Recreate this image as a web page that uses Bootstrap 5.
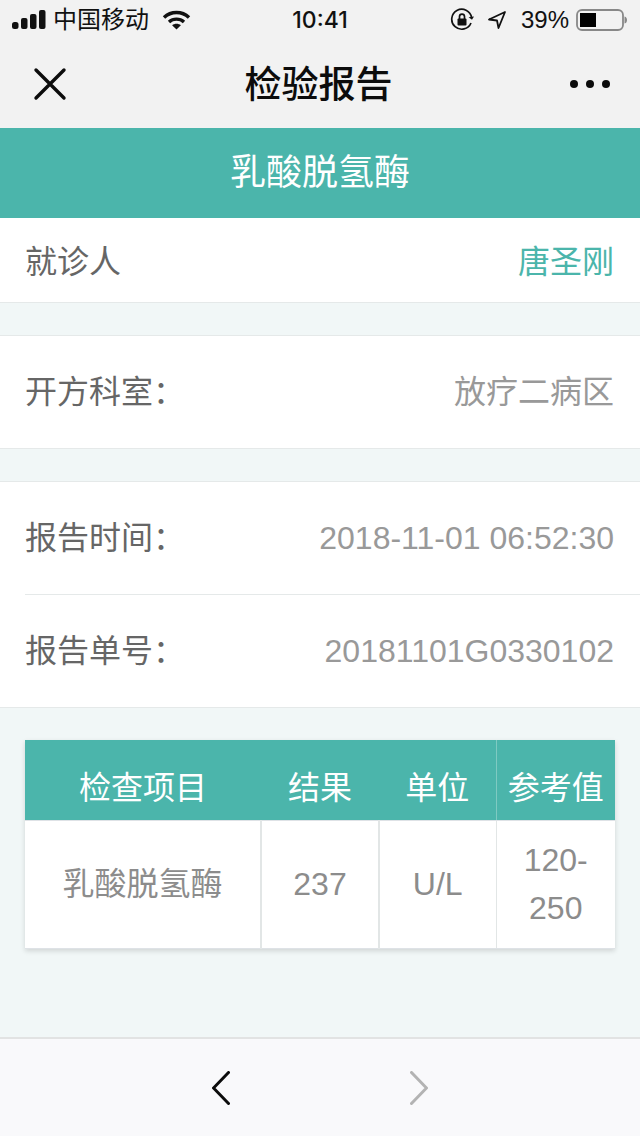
<!DOCTYPE html>
<html lang="zh-CN">
<head>
  <meta charset="UTF-8">
  <meta name="viewport" content="width=device-width, initial-scale=1">
  <title>检验报告</title>
  <link href="https://cdn.jsdelivr.net/npm/bootstrap@5.3.3/dist/css/bootstrap.min.css" rel="stylesheet">
  <style>
    html, body {
      height: 1136px;
      overflow: hidden;
    }
    body {
      background-color: #f1f7f7;
      font-family: "Liberation Sans", "Noto Sans CJK SC", sans-serif;
    }
    .screen {
      height: 1136px;
    }
    .status-bar {
      height: 40px;
      padding: 0 12px;
      background-color: #f2f2f2;
      color: #111;
      font-size: 24px;
    }
    .status-bar .carrier { font-size: 24px; line-height: 40px; margin-left: 5px; }
    .status-bar .clock { position: absolute; left: 0; right: 0; text-align: center; font-weight: 500; font-family: "Inter", "Liberation Sans", sans-serif; font-size: 23px; line-height: 42px; }
    .status-bar .pct { font-size: 24px; line-height: 40px; margin-left: 14px; margin-right: 7px; }
    .wifi-icon { margin-left: 13px; }
    .arrow-icon { margin-left: 13px; }
    .top-nav {
      height: 88px;
      background-color: #f2f2f2;
      padding: 0 30px 0 33px;
    }
    .top-nav .nav-title {
      font-size: 37px;
      font-weight: 500;
      color: #0c0c0c;
      line-height: 84px;
      padding-top: 4px;
    }
    .title-band {
      height: 90px;
      background-color: #4bb5ab;
      color: #fff;
      font-size: 36px;
      line-height: 90px;
      text-align: center;
    }
    .info-group {
      background-color: #fff;
      border-bottom: 1px solid #e5e9e9;
      padding-left: 25px;
    }
    .info-group.ruled { border-top: 1px solid #e5e9e9; margin-top: 32px; }
    .info-row {
      height: 112px;
      padding-right: 26px;
      font-size: 32px;
      color: #666;
    }
    .info-row + .info-row { border-top: 1px solid #e5e9e9; height: 113px; }
    .info-row.patient { height: 84px; padding-top: 4px; }
    .info-row .val { color: #999; }
    .info-row .val-name { color: #4bb5ab; }
    .result-wrap {
      margin: 32px 25px 0 25px;
      box-shadow: 0 2px 5px rgba(0, 0, 0, .14);
    }
    .result-table {
      width: 100%;
      table-layout: fixed;
      border-collapse: collapse;
      margin: 0;
      background-color: #fff;
    }
    .result-table th, .result-table td {
      text-align: center;
      vertical-align: middle;
      padding: 0;
      font-weight: 400;
    }
    .result-table th {
      height: 80px;
      padding-top: 16px;
      font-size: 32px;
      color: #fff;
      background-color: #4bb5ab;
      box-shadow: none;
    }
    .result-table th.divided { border-left: 1px solid #7fcac2; }
    .result-table td {
      height: 128px;
      font-size: 32px;
      line-height: 48px;
      color: #8c8c8c;
      background-color: #fff;
    }
    .result-table td + td { border-left: 2px solid #e2e6e6; }
    .result-table td:last-child { border-left-width: 1px; }
    .bottom-bar {
      height: 99px;
      background-color: #f9f9fb;
      border-top: 2px solid #e2e3e3;
    }
    .pager { gap: 180px; }
    .spacer-fill { flex: 1 1 auto; }
  </style>
</head>
<body>
  <div class="screen d-flex flex-column">

    <!-- status bar -->
    <div class="status-bar d-flex align-items-center position-relative">
      <svg width="36" height="20" viewBox="0 0 36 20" fill="#111">
        <rect x="0" y="12" width="6.5" height="7" rx="2.5"/>
        <rect x="9" y="8" width="6.5" height="11" rx="2"/>
        <rect x="18" y="4" width="6.5" height="15" rx="2"/>
        <rect x="27" y="0" width="6.5" height="19" rx="2"/>
      </svg>
      <span class="carrier">中国移动</span>
      <svg class="wifi-icon" width="29" height="20" viewBox="0 0 28 20" fill="none" stroke="#111" stroke-width="3.4">
        <path d="M1.5 7.5C8.5 .8 19.5 .8 26.5 7.5"/>
        <path d="M6.5 12C10.7 8.2 17.3 8.2 21.5 12"/>
        <path d="M14 19.5L9.6 15.2C12 13.2 16 13.2 18.4 15.2Z" fill="#111" stroke="none"/>
      </svg>
      <span class="clock">10:41</span>
      <div class="ms-auto d-flex align-items-center">
        <svg width="24" height="24" viewBox="0 0 24 24" fill="none" stroke="#111" stroke-width="1.7">
          <path d="M21 15A10 10 0 1 1 21.6 9.5"/>
          <path d="M18.6 9.2L22 11.8L24 8.6Z" fill="#111" stroke="none"/>
          <rect x="7.5" y="10.5" width="9" height="7" rx="1" fill="#111" stroke="none"/>
          <path d="M9.5 11V8.6a2.5 2.5 0 0 1 5 0V11"/>
        </svg>
        <svg class="arrow-icon" width="20" height="20" viewBox="0 0 20 20" fill="none" stroke="#111" stroke-width="1.8" stroke-linejoin="round">
          <path d="M18 2L2 9.5L10 10.5L11.5 18Z"/>
        </svg>
        <span class="pct">39%</span>
        <svg width="52" height="24" viewBox="0 0 52 24">
          <rect x="1" y="2" width="46" height="20" rx="5" fill="none" stroke="#888" stroke-width="1.8"/>
          <rect x="4" y="5" width="16" height="14" fill="#000"/>
          <path d="M48.5 8.5C50.5 9 51 10.5 51 12C51 13.5 50.5 15 48.5 15.5Z" fill="#888"/>
        </svg>
      </div>
    </div>

    <!-- nav -->
    <div class="top-nav d-flex align-items-center justify-content-between">
      <svg width="34" height="34" viewBox="0 0 34 34" fill="none" stroke="#0c0c0c" stroke-width="3.4" stroke-linecap="round">
        <path d="M3 3L31 31M31 3L3 31"/>
      </svg>
      <div class="nav-title">检验报告</div>
      <svg width="40" height="10" viewBox="0 0 40 10" fill="#0c0c0c">
        <circle cx="4" cy="5" r="4"/>
        <circle cx="20" cy="5" r="4"/>
        <circle cx="36" cy="5" r="4"/>
      </svg>
    </div>

    <div class="title-band">乳酸脱氢酶</div>

    <div class="info-group">
      <div class="info-row patient d-flex align-items-center justify-content-between">
        <span>就诊人</span><span class="val-name">唐圣刚</span>
      </div>
    </div>

    <div class="info-group ruled">
      <div class="info-row d-flex align-items-center justify-content-between">
        <span>开方科室：</span><span class="val">放疗二病区</span>
      </div>
    </div>

    <div class="info-group ruled">
      <div class="info-row d-flex align-items-center justify-content-between">
        <span>报告时间：</span><span class="val">2018-11-01 06:52:30</span>
      </div>
      <div class="info-row d-flex align-items-center justify-content-between">
        <span>报告单号：</span><span class="val">20181101G0330102</span>
      </div>
    </div>

    <!-- result table -->
    <div class="result-wrap">
      <table class="table result-table">
        <colgroup>
          <col style="width: 236px">
          <col style="width: 118px">
          <col style="width: 117px">
          <col style="width: 119px">
        </colgroup>
        <thead>
          <tr>
            <th>检查项目</th>
            <th>结果</th>
            <th>单位</th>
            <th class="divided">参考值</th>
          </tr>
        </thead>
        <tbody>
          <tr>
            <td>乳酸脱氢酶</td>
            <td>237</td>
            <td>U/L</td>
            <td>120-<br>250</td>
          </tr>
        </tbody>
      </table>
    </div>

    <div class="spacer-fill"></div>

    <!-- browser bar -->
    <div class="bottom-bar d-flex align-items-center justify-content-center">
      <div class="pager d-flex align-items-center">
        <svg width="18" height="34" viewBox="0 0 18 34" fill="none" stroke="#0c0c0c" stroke-width="3" stroke-linecap="round">
          <path d="M16.5 1.5L1.5 17L16.5 32.5"/>
        </svg>
        <svg width="18" height="34" viewBox="0 0 18 34" fill="none" stroke="#b3b3b3" stroke-width="3" stroke-linecap="round">
          <path d="M1.5 1.5L16.5 17L1.5 32.5"/>
        </svg>
      </div>
    </div>
  </div>
  <script src="https://cdn.jsdelivr.net/npm/bootstrap@5.3.3/dist/js/bootstrap.bundle.min.js"></script>
</body>
</html>
